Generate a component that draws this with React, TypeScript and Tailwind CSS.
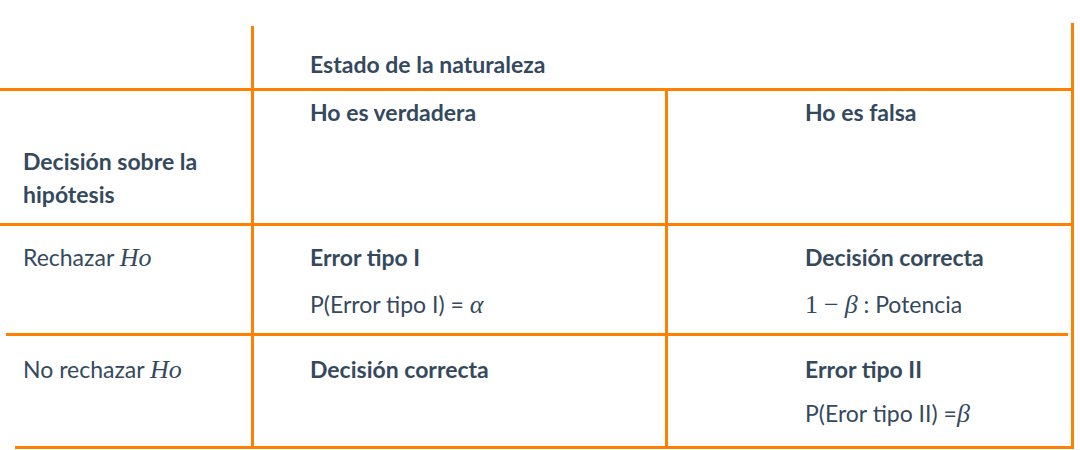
import React from "react";

const O = "bg-[#ff8000]";

function Bar({ className = "" }: { className?: string }) {
  return <div className={`w-[3px] shrink-0 bg-[#ff8000] ${className}`} />;
}

function M({ children }: { children: React.ReactNode }) {
  return (
    <span className="italic text-[26px] leading-none [font-family:'Liberation_Serif','Times_New_Roman',serif]">
      {children}
    </span>
  );
}

function R({ children, className = "" }: { children: React.ReactNode; className?: string }) {
  return (
    <span className={`text-[26px] leading-none [font-family:'Liberation_Serif','Times_New_Roman',serif] ${className}`}>
      {children}
    </span>
  );
}

export default function App() {
  return (
    <div className="w-[1080px] h-[450px] bg-white text-[#34495e] text-[23px] leading-[33px] [font-family:Lato,'Noto_Sans',sans-serif] overflow-hidden">
      {/* Row 0 */}
      <div className="flex h-[65px] mt-[23px]">
        <div className="w-[251px] shrink-0" />
        <Bar className="mt-[3px]" />
        <div className="flex-1 pl-[56px] pt-[25px] font-bold">Estado de la naturaleza</div>
        <Bar />
        <div className="w-[6px]" />
      </div>
      <div className={`h-[3px] w-[1074px] ${O}`} />

      {/* Row 1 */}
      <div className="flex h-[132px]">
        <div className="w-[251px] shrink-0 flex items-end pl-[23px] pb-[12px] font-bold">
          <div>
            Decisión sobre la
            <br />
            hipótesis
          </div>
        </div>
        <Bar />
        <div className="w-[411px] shrink-0 pl-[56px] pt-[5px] font-bold">Ho es verdadera</div>
        <Bar />
        <div className="w-[403px] shrink-0 pl-[137px] pt-[5px] font-bold">Ho es falsa</div>
        <Bar />
      </div>
      <div className={`h-[3px] w-[1074px] ${O}`} />

      {/* Row 2 */}
      <div className="flex h-[107px]">
        <div className="w-[251px] shrink-0 pl-[23px] pt-[15px]">
          Rechazar <M>Ho</M>
        </div>
        <Bar />
        <div className="w-[411px] shrink-0 pl-[56px] pt-[15px]">
          <div className="font-bold">Error tipo I</div>
          <div className="mt-[14px]">
            P(Error tipo I) = <M>α</M>
          </div>
        </div>
        <Bar />
        <div className="w-[403px] shrink-0 pl-[137px] pt-[15px]">
          <div className="font-bold">Decisión correcta</div>
          <div className="mt-[14px]">
            <R>1</R>
            <R className="mx-[6px]">−</R>
            <M>β</M> : Potencia
          </div>
        </div>
        <Bar />
      </div>
      <div className="flex h-[3px] w-[1074px]">
        <div className="w-[6px]" />
        <div className={`flex-1 ${O}`} />
        <div className="w-[3px]" />
        <Bar />
      </div>

      {/* Row 3 */}
      <div className="flex h-[110px]">
        <div className="w-[251px] shrink-0 pl-[23px] pt-[17px]">
          No rechazar <M>Ho</M>
        </div>
        <Bar />
        <div className="w-[411px] shrink-0 pl-[56px] pt-[17px]">
          <div className="font-bold">Decisión correcta</div>
        </div>
        <Bar />
        <div className="w-[403px] shrink-0 pl-[137px] pt-[17px]">
          <div className="font-bold">Error tipo II</div>
          <div className="mt-[11px]">
            P(Eror tipo II) =<M>β</M>
          </div>
        </div>
        <Bar />
      </div>
      <div className="flex h-[3px] w-[1074px]">
        <div className="w-[15px]" />
        <div className={`flex-1 ${O}`} />
      </div>
    </div>
  );
}
